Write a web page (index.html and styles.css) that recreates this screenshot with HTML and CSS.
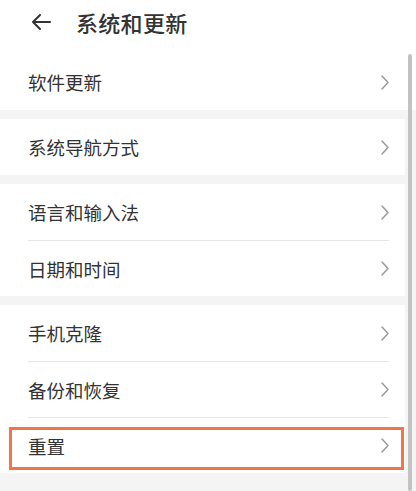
FILE: index.html
```html
<!DOCTYPE html>
<html lang="zh-CN">
<head>
    <meta charset="UTF-8">
    <meta name="viewport" content="width=device-width, initial-scale=1.0">
    <title>系统和更新</title>
    <link rel="stylesheet" href="styles.css">
</head>
<body>
    <div class="page">
        <header class="top-bar">
            <svg class="back" width="20" height="16" viewBox="0 0 20 16">
                <path d="M19 8H2M9 1L2 8l7 7" fill="none" stroke="#333" stroke-width="2" stroke-linecap="round" stroke-linejoin="round"/>
            </svg>
            <h1>系统和更新</h1>
        </header>

        <div class="group first">
            <div class="row"><span>软件更新</span><svg class="chevron" width="8" height="15" viewBox="0 0 8 15"><path d="M1 1l6 6.5L1 14"/></svg></div>
        </div>

        <div class="group">
            <div class="row"><span>系统导航方式</span><svg class="chevron" width="8" height="15" viewBox="0 0 8 15"><path d="M1 1l6 6.5L1 14"/></svg></div>
        </div>

        <div class="group">
            <div class="row"><span>语言和输入法</span><svg class="chevron" width="8" height="15" viewBox="0 0 8 15"><path d="M1 1l6 6.5L1 14"/></svg></div>
            <div class="row"><span>日期和时间</span><svg class="chevron" width="8" height="15" viewBox="0 0 8 15"><path d="M1 1l6 6.5L1 14"/></svg></div>
        </div>

        <div class="group">
            <div class="row"><span>手机克隆</span><svg class="chevron" width="8" height="15" viewBox="0 0 8 15"><path d="M1 1l6 6.5L1 14"/></svg></div>
            <div class="row"><span>备份和恢复</span><svg class="chevron" width="8" height="15" viewBox="0 0 8 15"><path d="M1 1l6 6.5L1 14"/></svg></div>
            <div class="row marked"><span>重置</span><svg class="chevron" width="8" height="15" viewBox="0 0 8 15"><path d="M1 1l6 6.5L1 14"/></svg></div>
        </div>

        <div class="scrollbar"></div>
    </div>
</body>
</html>
```

FILE: styles.css
```css
:root {
    --bg-color: #f4f4f4;
    --card-color: #ffffff;
    --text-color: #333333;
    --line-color: #e6e6e6;
    --chevron-color: #9a9a9a;
    --mark-color: #f0764a;
}

* {
    margin: 0;
    padding: 0;
    box-sizing: border-box;
}

body {
    background-color: var(--bg-color);
    color: var(--text-color);
    font-family: "Noto Sans CJK SC", "Noto Sans", sans-serif;
}

.page {
    position: relative;
    width: 416px;
    height: 491px;
    overflow: hidden;
}

.top-bar {
    height: 54px;
    background-color: var(--card-color);
    display: flex;
    align-items: center;
    padding-left: 31px;
    padding-bottom: 10px;
}

.top-bar h1 {
    font-size: 22px;
    font-weight: 500;
    margin-left: 25px;
    letter-spacing: 0.3px;
}

.group {
    background-color: var(--card-color);
    margin-bottom: 9px;
    width: 405px;
    padding: 0 16px 0 28px;
}

.group.first {
    width: 416px;
    padding-right: 27px;
}

.row {
    position: relative;
    height: 56px;
    display: flex;
    align-items: center;
    justify-content: space-between;
    font-size: 18.5px;
    border-top: 1px solid var(--line-color);
}

.row:first-child {
    border-top: none;
}

.chevron {
    fill: none;
    stroke: var(--chevron-color);
    stroke-width: 1.5;
    stroke-linecap: round;
    stroke-linejoin: round;
    margin-right: 0;
}

.marked::after {
    content: "";
    position: absolute;
    left: -19px;
    right: -15px;
    top: 9px;
    bottom: 3px;
    border: 3px solid var(--mark-color);
}

.scrollbar {
    position: absolute;
    left: 408px;
    top: 54px;
    bottom: 0;
    width: 4px;
    border-radius: 2px;
    background-color: #c2c2c2;
}
```
